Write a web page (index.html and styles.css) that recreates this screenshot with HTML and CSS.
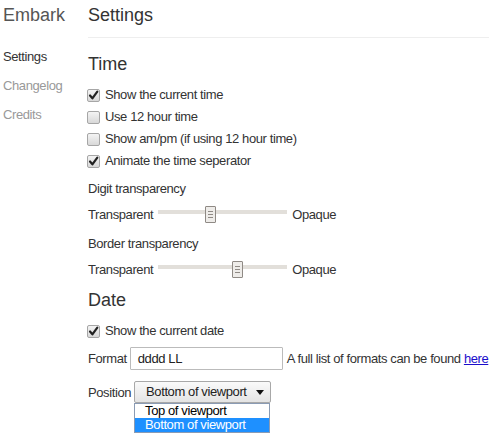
FILE: index.html
```html
<!DOCTYPE html>
<html>
<head>
<meta charset="utf-8">
<link rel="stylesheet" href="styles.css">
</head>
<body>
<div class="app">
  <aside class="sidebar">
    <div class="brand">Embark</div>
    <nav class="nav">
      <div class="nav-item active">Settings</div>
      <div class="nav-item">Changelog</div>
      <div class="nav-item">Credits</div>
    </nav>
  </aside>
  <main class="main">
    <h1 class="page-title">Settings</h1>

    <h2 class="section-title">Time</h2>
    <div class="checks">
      <div class="check-row"><span class="cb checked"><svg viewBox="0 0 13 13"><path d="M3 6.5 L5.4 9.3 L10.3 2.6" /></svg></span>Show the current time</div>
      <div class="check-row"><span class="cb"></span>Use 12 hour time</div>
      <div class="check-row"><span class="cb"></span>Show am/pm (if using 12 hour time)</div>
      <div class="check-row"><span class="cb checked"><svg viewBox="0 0 13 13"><path d="M3 6.5 L5.4 9.3 L10.3 2.6" /></svg></span>Animate the time seperator</div>
    </div>

    <div class="field">
      <div class="field-label">Digit transparency</div>
      <div class="slider-row">
        <span>Transparent</span>
        <div class="slider"><div class="track"></div><div class="thumb" style="left:47px"><i></i><i></i><i></i></div></div>
        <span>Opaque</span>
      </div>
    </div>
    <div class="field second">
      <div class="field-label">Border transparency</div>
      <div class="slider-row">
        <span>Transparent</span>
        <div class="slider"><div class="track"></div><div class="thumb" style="left:74px"><i></i><i></i><i></i></div></div>
        <span>Opaque</span>
      </div>
    </div>

    <h2 class="section-title date">Date</h2>
    <div class="checks">
      <div class="check-row"><span class="cb checked"><svg viewBox="0 0 13 13"><path d="M3 6.5 L5.4 9.3 L10.3 2.6" /></svg></span>Show the current date</div>
    </div>
    <div class="format-row">
      <span class="lbl">Format</span>
      <div class="text-input">dddd LL</div>
      <span class="hint">A full list of formats can be found <a href="#">here</a></span>
    </div>
    <div class="position-row">
      <span class="lbl">Position</span>
      <div class="select-wrap">
        <div class="select">Bottom of viewport<span class="arrow"></span></div>
        <div class="listbox">
          <div class="option">Top of viewport</div>
          <div class="option selected">Bottom of viewport</div>
        </div>
      </div>
    </div>
  </main>
</div>
</body>
</html>
```
FILE: styles.css
```css
html, body {
  margin: 0;
  padding: 0;
  background: #fff;
}
body {
  font-family: "Liberation Sans", Arial, sans-serif;
  font-size: 13px;
  letter-spacing: -0.4px;
  color: #333;
}
.app {
  display: flex;
  align-items: flex-start;
  min-height: 435px;
}
.sidebar {
  width: 85px;
  padding-left: 3px;
  flex: none;
}
.brand {
  font-size: 18px;
  letter-spacing: 0;
  line-height: 24px;
  padding-top: 3px;
  color: #555;
}
.nav {
  margin-top: 15px;
}
.nav-item {
  line-height: 29px;
  color: #999;
}
.nav-item.active {
  color: #333;
}
.main {
  flex: 1;
  padding-bottom: 32px;
}
.page-title {
  margin: 0;
  font-size: 18px;
  letter-spacing: 0;
  font-weight: normal;
  line-height: 24px;
  padding-top: 3px;
  padding-bottom: 10px;
  border-bottom: 1px solid #eee;
  color: #333;
}
.section-title {
  margin: 14px 0 8px;
  font-size: 18px;
  letter-spacing: 0;
  font-weight: normal;
  line-height: 24px;
  color: #333;
}
.section-title.date {
  margin-top: 7px;
}
.check-row {
  display: flex;
  align-items: center;
  line-height: 22px;
}
.cb {
  width: 11px;
  height: 11px;
  border: 1px solid #a6a6a6;
  border-radius: 2px;
  background: linear-gradient(#f4f4f4, #d8d8d8);
  margin-right: 5px;
  margin-left: -1px;
  display: inline-flex;
  flex: none;
}
.cb svg {
  width: 13px;
  height: 13px;
  margin: -1px;
}
.cb svg path {
  fill: none;
  stroke: #222;
  stroke-width: 2.2;
  stroke-linecap: round;
  stroke-linejoin: round;
}
.field {
  margin-top: 6px;
}
.field.second {
  margin-top: 7px;
}
.field-label {
  line-height: 22px;
}
.slider-row {
  margin-top: 4px;
  display: flex;
  line-height: 22px;
  height: 22px;
}
.slider {
  position: relative;
  width: 129px;
  height: 22px;
  margin: 0 5px 0 5px;
}
.track {
  position: absolute;
  left: 0;
  right: 0;
  top: 6px;
  height: 4px;
  background: #e2dfda;
}
.thumb {
  position: absolute;
  top: 2px;
  width: 9px;
  height: 15px;
  border: 1px solid #8f8a85;
  border-radius: 1px;
  background: #eeece9;
  display: flex;
  flex-direction: column;
  align-items: center;
  justify-content: center;
  gap: 2px;
}
.thumb i {
  display: block;
  width: 5px;
  height: 1px;
  background: #8f8a85;
}
.lbl {
  margin-right: 3px;
}
.format-row {
  margin-top: 5px;
  display: flex;
  align-items: center;
  height: 23px;
}
.text-input {
  width: 144px;
  height: 21px;
  line-height: 21px;
  border: 1px solid #bbb;
  border-radius: 1px;
  padding-left: 7px;
  margin-right: 4px;
  color: #222;
  flex: none;
}
.hint {
  white-space: nowrap;
}
.hint a {
  color: #1a0dcb;
  text-decoration: underline;
}
.position-row {
  margin-top: 11px;
  display: flex;
  align-items: center;
}
.select-wrap {
  position: relative;
}
.select {
  width: 124px;
  height: 20px;
  line-height: 20px;
  padding-left: 11px;
  border: 1px solid #a8a8a8;
  border-radius: 2px;
  background: linear-gradient(#fafafa, #e4e4e4);
  color: #222;
  position: relative;
}
.arrow {
  position: absolute;
  right: 6px;
  top: 8px;
  width: 0;
  height: 0;
  border-left: 4px solid transparent;
  border-right: 4px solid transparent;
  border-top: 5px solid #111;
}
.listbox {
  position: absolute;
  top: 22px;
  left: 0;
  width: 134px;
  border: 1px solid #8a9bb4;
  background: #fff;
  z-index: 2;
}
.option {
  line-height: 14px;
  padding-left: 10px;
  color: #000;
}
.option.selected {
  background: #1e90ff;
  color: #fff;
}
```
